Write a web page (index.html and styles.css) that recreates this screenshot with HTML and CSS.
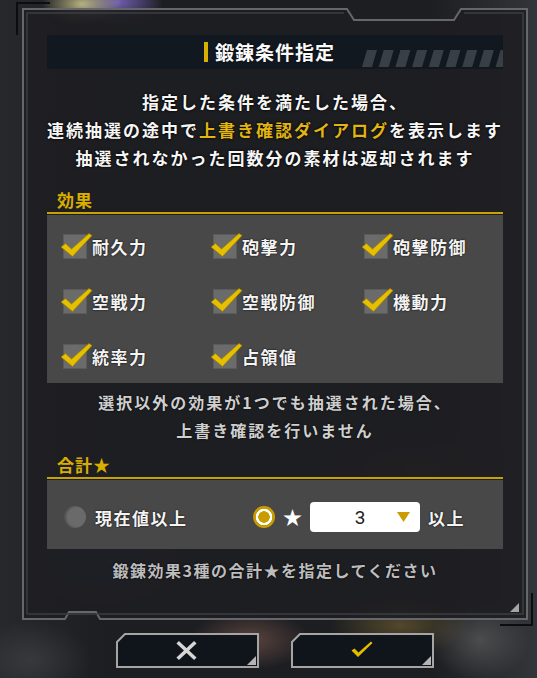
FILE: index.html
```html
<!DOCTYPE html>
<html lang="ja">
<head>
<meta charset="utf-8">
<link rel="stylesheet" href="styles.css">
</head>
<body>
<div class="page">
  <svg class="frame" width="537" height="678" viewBox="0 0 537 678">
    <path class="frame-fill" d="M23,9 H347 L354,20 H454 L461,9 H527 V619 H100 L96,612 H69 L65,619 H23 Z"/>
    <path class="frame-inner" d="M27,614 V13 H344 M464,13 H523 V614 H27"/>
    <path class="accent" d="M17,35 V3 H50 M500,625 H532 V593"/>
    <polygon class="corner-tri" points="519,603 519,612 510,612"/>
  </svg>
  <div class="dialog">
    <div class="title">
      <span class="title-bar"></span>
      <span class="title-text">鍛錬条件指定</span>
      <svg class="stripes" width="141" height="17" viewBox="0 0 141 17">
        <g fill="#3a3f45">
          <polygon points="0,17 10,17 15,0 5,0"/>
          <polygon points="16.7,17 26.7,17 31.7,0 21.7,0"/>
          <polygon points="33.4,17 43.4,17 48.4,0 38.4,0"/>
          <polygon points="50.1,17 60.1,17 65.1,0 55.1,0"/>
          <polygon points="66.8,17 76.8,17 81.8,0 71.8,0"/>
          <polygon points="83.5,17 93.5,17 98.5,0 88.5,0"/>
          <polygon points="100.2,17 110.2,17 115.2,0 105.2,0"/>
          <polygon points="116.9,17 126.9,17 131.9,0 121.9,0"/>
          <polygon points="133.6,17 143.6,17 148.6,0 138.6,0"/>
        </g>
      </svg>
    </div>

    <div class="desc">
      <p>指定した条件を満たした場合、</p>
      <p>連続抽選の途中で<span class="hl">上書き確認ダイアログ</span>を表示します</p>
      <p>抽選されなかった回数分の素材は返却されます</p>
    </div>

    <div class="sec-head">効果</div>
    <div class="panel effects">
      <label class="chk"><span class="box"><svg width="24" height="24" viewBox="0 0 24 24"><polygon points="-2,13 2.5,9.5 8.5,15 26,-0.5 29,1.5 9.5,22.5"/></svg></span><span>耐久力</span></label>
      <label class="chk"><span class="box"><svg width="24" height="24" viewBox="0 0 24 24"><polygon points="-2,13 2.5,9.5 8.5,15 26,-0.5 29,1.5 9.5,22.5"/></svg></span><span>砲撃力</span></label>
      <label class="chk"><span class="box"><svg width="24" height="24" viewBox="0 0 24 24"><polygon points="-2,13 2.5,9.5 8.5,15 26,-0.5 29,1.5 9.5,22.5"/></svg></span><span>砲撃防御</span></label>
      <label class="chk"><span class="box"><svg width="24" height="24" viewBox="0 0 24 24"><polygon points="-2,13 2.5,9.5 8.5,15 26,-0.5 29,1.5 9.5,22.5"/></svg></span><span>空戦力</span></label>
      <label class="chk"><span class="box"><svg width="24" height="24" viewBox="0 0 24 24"><polygon points="-2,13 2.5,9.5 8.5,15 26,-0.5 29,1.5 9.5,22.5"/></svg></span><span>空戦防御</span></label>
      <label class="chk"><span class="box"><svg width="24" height="24" viewBox="0 0 24 24"><polygon points="-2,13 2.5,9.5 8.5,15 26,-0.5 29,1.5 9.5,22.5"/></svg></span><span>機動力</span></label>
      <label class="chk"><span class="box"><svg width="24" height="24" viewBox="0 0 24 24"><polygon points="-2,13 2.5,9.5 8.5,15 26,-0.5 29,1.5 9.5,22.5"/></svg></span><span>統率力</span></label>
      <label class="chk"><span class="box"><svg width="24" height="24" viewBox="0 0 24 24"><polygon points="-2,13 2.5,9.5 8.5,15 26,-0.5 29,1.5 9.5,22.5"/></svg></span><span>占領値</span></label>
    </div>

    <div class="note">
      <p>選択以外の効果が1つでも抽選された場合、</p>
      <p>上書き確認を行いません</p>
    </div>

    <div class="sec-head">合計★</div>
    <div class="panel total">
      <div class="opt opt1"><span class="radio"></span><span class="opt-label">現在値以上</span></div>
      <span class="radio on"></span>
      <span class="star">★</span>
      <div class="dd"><span class="dd-val">3</span><svg class="dd-arrow" width="13" height="10" viewBox="0 0 13 10"><polygon points="0,0 13,0 6.5,10" fill="#c99c00"/></svg></div>
      <span class="ijo">以上</span>
    </div>

    <div class="foot">鍛錬効果3種の合計★を指定してください</div>

    <div class="buttons">
      <button class="btn">
        <svg width="143" height="35" viewBox="0 0 143 35">
          <path d="M1,9 L9,1 H142 V34 H1 Z" fill="#10141b" stroke="#a5a5a5" stroke-width="2"/>
          <polygon points="140,23 140,32 131,32" fill="#b4b4b4"/>
          <path d="M63,10.5 L78,24.5 M78,10.5 L63,24.5" stroke="#d6d6d6" stroke-width="3.6" stroke-linecap="square"/>
        </svg>
      </button>
      <button class="btn">
        <svg width="143" height="35" viewBox="0 0 143 35">
          <path d="M1,9 L9,1 H142 V34 H1 Z" fill="#10141b" stroke="#a5a5a5" stroke-width="2"/>
          <polygon points="140,23 140,32 131,32" fill="#b4b4b4"/>
          <polygon points="60.5,17.5 63.5,15.5 67.5,19.5 80,8.5 81.5,10 67,24" fill="#e3bd00"/>
        </svg>
      </button>
    </div>
  </div>
</div>
</body>
</html>
```

FILE: styles.css
```css
* { box-sizing: border-box; }

html, body {
  margin: 0;
  padding: 0;
}

body {
  width: 537px;
  height: 678px;
  overflow: hidden;
  font-family: "Noto Sans CJK JP", "Noto Sans", sans-serif;
  font-weight: 700;
  color: #f2f2f2;
  background:
    radial-gradient(ellipse 40px 22px at 82px 4px, rgba(205, 200, 140, 0.85), rgba(205, 200, 140, 0) 100%),
    radial-gradient(ellipse 45px 24px at 118px 2px, rgba(120, 100, 190, 0.9), rgba(120, 100, 190, 0) 100%),
    radial-gradient(ellipse 60px 30px at 250px 640px, rgba(110, 80, 72, 0.75), rgba(110, 80, 72, 0) 100%),
    radial-gradient(ellipse 70px 30px at 400px 625px, rgba(120, 100, 50, 0.6), rgba(120, 100, 50, 0) 100%),
    radial-gradient(ellipse 50px 40px at 480px 640px, rgba(100, 100, 100, 0.6), rgba(100, 100, 100, 0) 100%),
    radial-gradient(ellipse 60px 40px at 30px 660px, rgba(70, 70, 74, 0.6), rgba(70, 70, 74, 0) 100%),
    radial-gradient(ellipse 80px 50px at 110px 560px, rgba(40, 70, 100, 0.5), rgba(40, 70, 100, 0) 100%),
    radial-gradient(ellipse 100px 40px at 420px 470px, rgba(90, 70, 30, 0.4), rgba(90, 70, 30, 0) 100%),
    linear-gradient(90deg, #27282c 0%, #1d1e22 20%, #1d1e21 80%, #34353a 100%);
}

p { margin: 0; }

.page {
  position: relative;
  width: 537px;
  height: 678px;
}

.frame {
  position: absolute;
  left: 0;
  top: 0;
}

.frame-fill {
  fill: rgba(30, 30, 34, 0.9);
  stroke: #65676b;
  stroke-width: 2;
}

.frame-inner {
  fill: none;
  stroke: #3c3e42;
  stroke-width: 1.5;
}

.accent {
  fill: none;
  stroke: #0c0d0f;
  stroke-width: 2;
}

.corner-tri { fill: #a5a5a5; }

.dialog {
  position: relative;
  padding: 35px 34px 0 47px;
  width: 537px;
}

/* title */
.title {
  height: 34px;
  background: #111820;
  display: flex;
  align-items: center;
  padding-left: 157px;
}

.title-bar {
  width: 4px;
  height: 20px;
  background: #d8ae00;
}

.title-text {
  margin-left: 7px;
  font-size: 19px;
  letter-spacing: 1px;
  line-height: 34px;
  color: #fafafa;
  text-shadow: 0 0 2px #000;
}

.stripes {
  margin-left: auto;
  align-self: flex-end;
  margin-bottom: 2px;
}

/* description */
.desc {
  margin-top: 19px;
  text-align: center;
  font-size: 17px;
  line-height: 28px;
  letter-spacing: 2px;
  color: #f6f6f6;
  text-shadow: 0 0 3px #000, 0 0 1px #000;
}

.hl { color: #e0b514; }

/* section heads */
.sec-head {
  margin-top: 18px;
  padding: 0 0 2px 10px;
  height: 24px;
  line-height: 20px;
  font-size: 17px;
  letter-spacing: 1px;
  color: #d9ae00;
  border-bottom: 2px solid #c9a200;
}

.panel {
  margin-top: 1px;
  background: #484848;
}

/* effects */
.effects {
  display: grid;
  grid-template-columns: 150px 151px 1fr;
  grid-auto-rows: 25px;
  row-gap: 30px;
  padding: 19px 0 14px 16px;
}

.chk {
  display: flex;
  align-items: center;
  gap: 5px;
  font-size: 17px;
  letter-spacing: 1.5px;
  color: #f4f4f4;
  text-shadow: 0 0 2px #000;
}

.box {
  position: relative;
  width: 24px;
  height: 25px;
  background: #6b6b6b;
  border: 1px solid #5b5b5b;
  flex: none;
}

.box svg {
  position: absolute;
  left: -1px;
  top: -1px;
  overflow: visible;
}

.box polygon {
  fill: #e6c000;
  stroke: #9a7e00;
  stroke-width: 0.7;
}

/* note */
.note {
  margin-top: 5px;
  text-align: center;
  font-size: 16px;
  line-height: 28px;
  letter-spacing: 2px;
  color: #cfcfcf;
  text-shadow: 0 0 2px #000;
}

.note + .sec-head { margin-top: 11px; }

/* total */
.total {
  display: flex;
  align-items: center;
  padding: 22px 0 17px 17px;
  height: 69px;
}

.opt1 {
  display: flex;
  align-items: center;
  width: 189px;
}

.radio {
  width: 22px;
  height: 22px;
  border-radius: 50%;
  background: #6a6a6a;
  box-shadow: inset 2px 0 2px rgba(0, 0, 0, 0.25);
  flex: none;
}

.radio.on {
  background: radial-gradient(circle, #c99c00 0 5.5px, #ffffff 6px 8px, #c99c00 8.5px);
  box-shadow: none;
}

.opt-label {
  margin-left: 9px;
  font-size: 17px;
  letter-spacing: 1.5px;
  color: #f4f4f4;
  text-shadow: 0 0 2px #000;
}

.star {
  margin-left: 8px;
  font-size: 19px;
  line-height: 30px;
  color: #ffffff;
  font-weight: 400;
}

.dd {
  margin-left: 8px;
  width: 110px;
  height: 30px;
  background: #ffffff;
  border-radius: 4px;
  display: flex;
  align-items: center;
  padding-left: 44px;
}

.dd-val {
  width: 12px;
  text-align: center;
  font-family: Roboto, "Liberation Sans", sans-serif;
  font-weight: 400;
  font-size: 19px;
  color: #222;
}

.dd-arrow { margin-left: 31px; }

.ijo {
  margin-left: 8px;
  font-size: 17px;
  letter-spacing: 1.5px;
  color: #f4f4f4;
  text-shadow: 0 0 2px #000;
}

/* footer */
.foot {
  margin-top: 7px;
  text-align: center;
  font-size: 16px;
  line-height: 28px;
  letter-spacing: 1.5px;
  color: #bdbdbd;
  text-shadow: 0 0 2px #000;
}

/* buttons */
.buttons {
  margin-top: 49px;
  display: flex;
  gap: 32px;
  padding-left: 69px;
}

.btn {
  width: 143px;
  height: 35px;
  padding: 0;
  border: 0;
  background: none;
  display: block;
}

.btn svg { display: block; }
```
